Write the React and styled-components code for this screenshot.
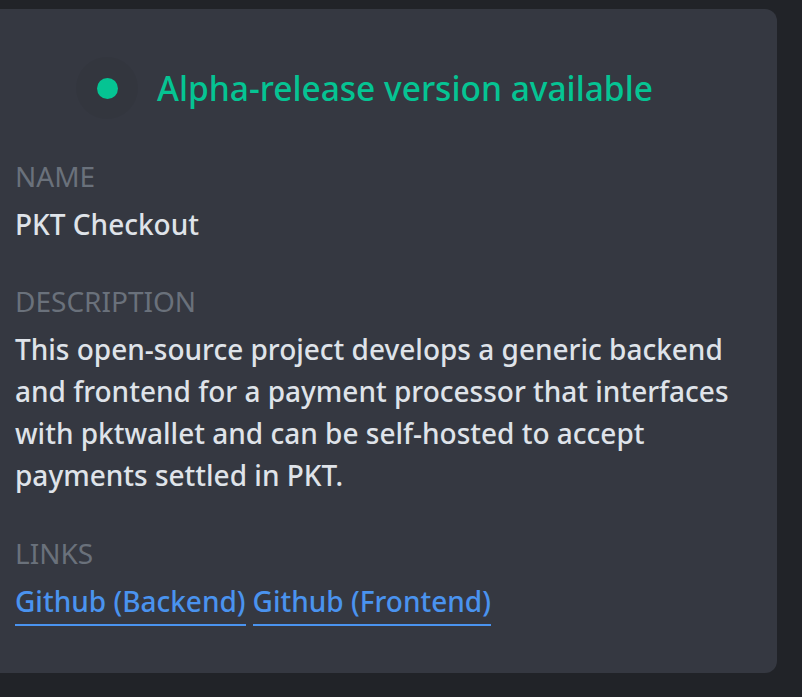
import React from "react";
import styled, { createGlobalStyle } from "styled-components";

const Global = createGlobalStyle`
  html, body { margin: 0; padding: 0; background: #212328; }
  body { font-family: "Noto Sans", "Open Sans", sans-serif; overflow: hidden; }
  #root { min-height: 697px; }
`;

const Page = styled.div`
  padding: 9px 0 25px 0;
  height: 697px;
  box-sizing: border-box;
`;

const Card = styled.section`
  margin-left: -20px;
  width: 797px;
  box-sizing: border-box;
  background: #353841;
  border-radius: 12px;
  padding: 39px 20px 47px 35px;
`;

const Header = styled.div`
  display: flex;
  align-items: center;
  height: 80px;
  padding-left: 61px;
  gap: 19px;
`;

const Halo = styled.div`
  width: 62px;
  height: 62px;
  border-radius: 50%;
  background: rgba(0, 0, 0, 0.035);
  display: flex;
  align-items: center;
  justify-content: center;
`;

const Dot = styled.span`
  width: 21px;
  height: 21px;
  border-radius: 50%;
  background: #05c493;
`;

const Status = styled.h2`
  margin: 0;
  font-size: 33.5px;
  font-weight: 500;
  color: #05c493;
  line-height: 40px;
`;

const Section = styled.div`
  margin-top: ${(p) => p.$top}px;
`;

const Label = styled.div`
  font-size: 28px;
  line-height: 42px;
  color: #6a717b;
  text-transform: uppercase;
  margin-bottom: 6px;
`;

const Value = styled.div`
  font-size: 28px;
  line-height: 42px;
  color: #dfe3e9;
  font-weight: 500;
  width: 745px;
`;

const Links = styled.div`
  display: flex;
  gap: 7px;
`;

const Link = styled.a`
  display: inline-block;
  font-size: 28px;
  line-height: 34px;
  padding: 4px 0 6px;
  color: #4a93ef;
  text-decoration: none;
  border-bottom: 2px solid #4a93ef;
  font-weight: 500;
`;

export default function App() {
  return (
    <>
      <Global />
      <Page>
        <Card>
          <Header>
            <Halo>
              <Dot />
            </Halo>
            <Status>Alpha-release version available</Status>
          </Header>
          <Section $top={27}>
            <Label>Name</Label>
            <Value>PKT Checkout</Value>
          </Section>
          <Section $top={35}>
            <Label>Description</Label>
            <Value>
              This open-source project develops a generic backend and frontend
              for a payment processor that interfaces with pktwallet and can be
              self-hosted to accept payments settled in PKT.
            </Value>
          </Section>
          <Section $top={36}>
            <Label>Links</Label>
            <Links>
              <Link href="#">Github (Backend)</Link>
              <Link href="#">Github (Frontend)</Link>
            </Links>
          </Section>
        </Card>
      </Page>
    </>
  );
}
